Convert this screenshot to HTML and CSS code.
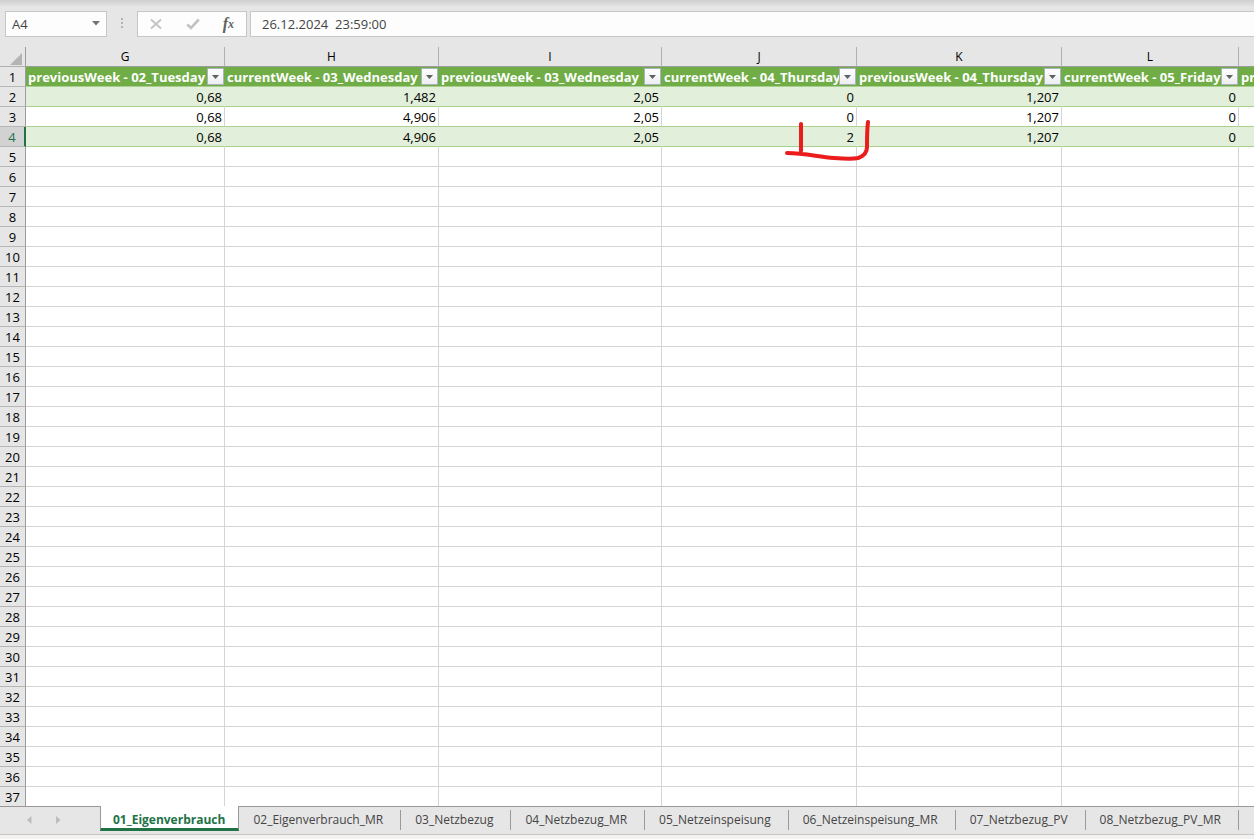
FILE: index.html
```html
<!DOCTYPE html>
<html lang="de">
<head>
<meta charset="utf-8">
<meta name="viewport" content="width=device-width, initial-scale=1">
<title>01_Eigenverbrauch</title>
<link rel="stylesheet" href="styles.css">
</head>
<body>
<div class="workbook">
  <header class="formula-bar">
    <div class="name-box">
      <input class="name-input" type="text" value="A4" aria-label="Namenfeld">
      <button class="name-toggle" type="button" aria-label="Namen anzeigen">
        <svg width="8" height="5" viewBox="0 0 8 5"><path d="M0 0h8L4 4.500z" fill="#737373"/></svg>
      </button>
    </div>
    <svg class="grip" width="3" height="12" viewBox="0 0 3 12" aria-hidden="true"><path d="M0 0h2v2H0zM0 4h2v2H0zM0 8h2v2H0z" fill="#b4b4b4"/></svg>
    <div class="entry-tools">
      <button class="tool" type="button" aria-label="Abbrechen">
        <svg width="14" height="14" viewBox="0 0 14 14"><path d="M2 2.500L12 11.500M12 2.500L2 11.500" stroke="#c3c3c3" stroke-width="1.800" fill="none"/></svg>
      </button>
      <button class="tool" type="button" aria-label="Eingeben">
        <svg width="14" height="14" viewBox="0 0 14 14"><path d="M1.200 7.500L5 11L12.800 2.500" stroke="#c3c3c3" stroke-width="2.600" fill="none"/></svg>
      </button>
      <button class="tool" type="button" aria-label="Funktion einfügen"><span class="fx-f">f</span><span class="fx-x">x</span></button>
    </div>
    <input class="formula-input" type="text" value="26.12.2024  23:59:00" aria-label="Bearbeitungsleiste">
  </header>

  <main class="sheet">
    <table class="grid">
      <colgroup>
        <col class="col-head"><col class="col-g"><col class="col-h"><col class="col-i"><col class="col-j"><col class="col-k"><col class="col-l"><col>
      </colgroup>
      <thead>
        <tr class="letters">
          <th class="corner"><svg width="12" height="12" viewBox="0 0 12 12" aria-hidden="true"><path d="M12 0v12H0z" fill="#b4b4b4"/></svg></th>
          <th scope="col">G</th><th scope="col">H</th><th scope="col">I</th><th scope="col">J</th><th scope="col">K</th><th scope="col">L</th><th scope="col"></th>
        </tr>
      </thead>
      <tbody id="rows"></tbody>
    </table>
    <svg class="ink" width="86" height="42" viewBox="0 0 86 42" aria-hidden="true">
      <path d="M17 4V31M3 33C22 33 34 37 50 38C62 39 70 39 74 38C80 36 83 33 83 27C83 18 83 9 84 2" fill="none" stroke="#ea1c1c" stroke-width="4" stroke-linecap="round" stroke-linejoin="round"/>
    </svg>
  </main>

  <footer class="footer">
    <nav class="tab-bar" aria-label="Tabellenblätter">
      <div class="scrollers">
        <button class="scroller" type="button" aria-label="Zurück"><svg width="5" height="8" viewBox="0 0 5 8"><path d="M4.500 0v8L0 4z" fill="#bdbdbd"/></svg></button>
        <button class="scroller" type="button" aria-label="Weiter"><svg width="5" height="8" viewBox="0 0 5 8"><path d="M0 0v8l4.500-4z" fill="#bdbdbd"/></svg></button>
      </div>
      <button class="tab tab-active" type="button">01_Eigenverbrauch</button>
      <button class="tab" type="button">02_Eigenverbrauch_MR</button>
      <button class="tab" type="button">03_Netzbezug</button>
      <button class="tab" type="button">04_Netzbezug_MR</button>
      <button class="tab" type="button">05_Netzeinspeisung</button>
      <button class="tab" type="button">06_Netzeinspeisung_MR</button>
      <button class="tab" type="button">07_Netzbezug_PV</button>
      <button class="tab" type="button">08_Netzbezug_PV_MR</button>
    </nav>
    <div class="status"></div>
  </footer>
</div>
<script src="grid.js"></script>
</body>
</html>
```

FILE: styles.css
```css
* { box-sizing: border-box; }

body {
  margin: 0;
  font-family: "Open Sans", "Noto Sans", sans-serif;
  font-size: 13px;
  color: #000;
  background: #e6e6e6;
}

button, input { font: inherit; color: inherit; }
button { padding: 0; border: 0; background: none; }
svg { display: block; }

.workbook {
  display: flex;
  flex-direction: column;
  height: 100vh;
  overflow: hidden;
}

/* Formula bar */
.formula-bar {
  display: flex;
  flex: none;
  align-items: center;
  padding: 11px 0 10px 5px;
  background: linear-gradient(#cfcfcf, #e6e6e6 7px);
  color: #444;
}
.name-box {
  display: flex;
  align-items: center;
  width: 102px;
  height: 26px;
  border: 1px solid #c6c6c6;
  background: #fdfdfd;
}
.name-input {
  flex: 1;
  min-width: 0;
  padding: 0 0 0 6px;
  border: 0;
  background: none;
}
.name-toggle { padding: 0 6px 2px 4px; }
.grip { margin: 0 13px 0 14px; }
.entry-tools {
  display: flex;
  align-items: center;
  justify-content: space-between;
  width: 110px;
  height: 26px;
  padding: 0 12px 0 11px;
  border: 1px solid #c6c6c6;
  background: #fdfdfd;
}
.tool {
  display: flex;
  align-items: center;
  color: #606060;
  font-family: "Liberation Serif", serif;
  font-style: italic;
  font-weight: bold;
}
.fx-f { font-size: 16px; line-height: 16px; }
.fx-x { font-size: 12px; line-height: 16px; }
.formula-input {
  flex: 1;
  min-width: 0;
  height: 26px;
  margin-left: 3px;
  padding: 0 11px;
  border: 1px solid #c6c6c6;
  border-right: 0;
  background: #fdfdfd;
  white-space: pre;
}

/* Grid */
.sheet {
  position: relative;
  flex: 1;
  min-height: 0;
  overflow: hidden;
  background: #fff;
}
.grid {
  width: 100%;
  border-collapse: separate;
  border-spacing: 0;
  table-layout: fixed;
  line-height: 18px;
}
.col-head { width: 26px; }
.col-g { width: 199px; }
.col-h { width: 214px; }
.col-i { width: 223px; }
.col-j { width: 195px; }
.col-k { width: 205px; }
.col-l { width: 177px; }

.grid th, .grid td {
  height: 20px;
  padding: 0 2px 0 0;
  border: 0 solid #d4d4d4;
  border-width: 0 1px 1px 0;
  font-weight: normal;
  white-space: nowrap;
  overflow: hidden;
}
.grid td { text-align: right; }
.grid .letters th {
  padding: 0;
  border-color: #9c9c9c;
  border-right-color: #b0b0b0;
  background: #e6e6e6;
  font-size: 12px;
}
.grid .letters .corner { border-right-color: #9c9c9c; border-bottom-color: #b0b0b0; }
.corner svg { margin: 4px 0 0 10px; }
.grid .row-head {
  padding: 1px 0 0;
  border-color: #9c9c9c;
  border-bottom-color: #b6b6b6;
  background: #e6e6e6;
  text-align: center;
}
.grid .current .row-head {
  border-right: 2px solid #217346;
  background: #d2d2d2;
  color: #217346;
}
.grid .fields td {
  padding: 0 1px 0 2px;
  border-color: #70ad47;
  border-bottom-color: #a9d08e;
  border-right: 0;
  background: #70ad47;
  color: #fff;
  font-weight: bold;
}
.grid th:last-child, .grid td:last-child { border-right: 0; }
.field { display: flex; align-items: center; justify-content: space-between; }
.field-name { min-width: 0; }
.filter {
  display: flex;
  flex: none;
  align-items: center;
  justify-content: center;
  width: 17px;
  height: 17px;
  border: 1px solid #abb1bd;
  background: linear-gradient(#fff, #eceef3);
}
.grid .data td { border-bottom-color: #a9d08e; }
.grid .banded td { border-right-color: #e2efda; background: #e2efda; }

/* Pen annotation lying over the cells */
.ink { position: absolute; left: 784px; top: 73px; }

/* Sheet tabs */
.footer { flex: none; }
.tab-bar {
  display: flex;
  height: 28px;
  border-top: 1px solid #999;
  background: #e6e6e6;
  color: #444;
  font-size: 12px;
}
.scrollers {
  display: flex;
  flex: none;
  align-items: center;
  gap: 24px;
  width: 100px;
  padding: 0 0 2px 27px;
}
.tab {
  position: relative;
  flex: none;
  padding: 0 18px 3px 14px;
  white-space: nowrap;
}
.tab::after {
  content: "";
  position: absolute;
  top: 3px;
  right: 0;
  width: 1px;
  height: 20px;
  background: #999;
}
.tab-active {
  height: 25px;
  margin-top: -1px;
  padding: 4px 13px 0 12px;
  border: 1px solid #999;
  border-width: 0 1px 3px;
  border-bottom-color: #217346;
  background: #fff;
  color: #217346;
  font-weight: bold;
}
.tab-active::after { display: none; }
.status {
  height: 5px;
  border-top: 1px solid #c6c6c6;
  background: #f3f2f1;
}
```

FILE: grid.js
```js
const fields = [
  "previousWeek - 02_Tuesday",
  "currentWeek - 03_Wednesday",
  "previousWeek - 03_Wednesday",
  "currentWeek - 04_Thursday",
  "previousWeek - 04_Thursday",
  "currentWeek - 05_Friday",
  "pr"
];
const data = {
  2: ["0,68", "1,482", "2,05", "0", "1,207", "0", ""],
  3: ["0,68", "4,906", "2,05", "0", "1,207", "0", ""],
  4: ["0,68", "4,906", "2,05", "2", "1,207", "0", ""]
};
const arrow = '<svg width="7" height="4" viewBox="0 0 7 4"><path d="M0 0h7L3.500 4z" fill="#606060"/></svg>';
const body = document.getElementById("rows");

for (let n = 1; n <= 37; n++) {
  const row = body.insertRow();
  const head = document.createElement("th");
  head.scope = "row";
  head.className = "row-head";
  head.textContent = n;
  row.append(head);
  if (n === 1) row.className = "fields";
  if (data[n]) row.className = "data" + (n % 2 === 0 ? " banded" : "") + (n === 4 ? " current" : "");

  fields.forEach((name, i) => {
    const cell = row.insertCell();
    if (n === 1) {
      const filter = i < fields.length - 1
        ? `<button class="filter" type="button" aria-label="Filter ${name}">${arrow}</button>`
        : "";
      cell.innerHTML = `<div class="field"><span class="field-name">${name}</span>${filter}</div>`;
    } else if (data[n]) {
      cell.textContent = data[n][i];
    }
  });
}
```
